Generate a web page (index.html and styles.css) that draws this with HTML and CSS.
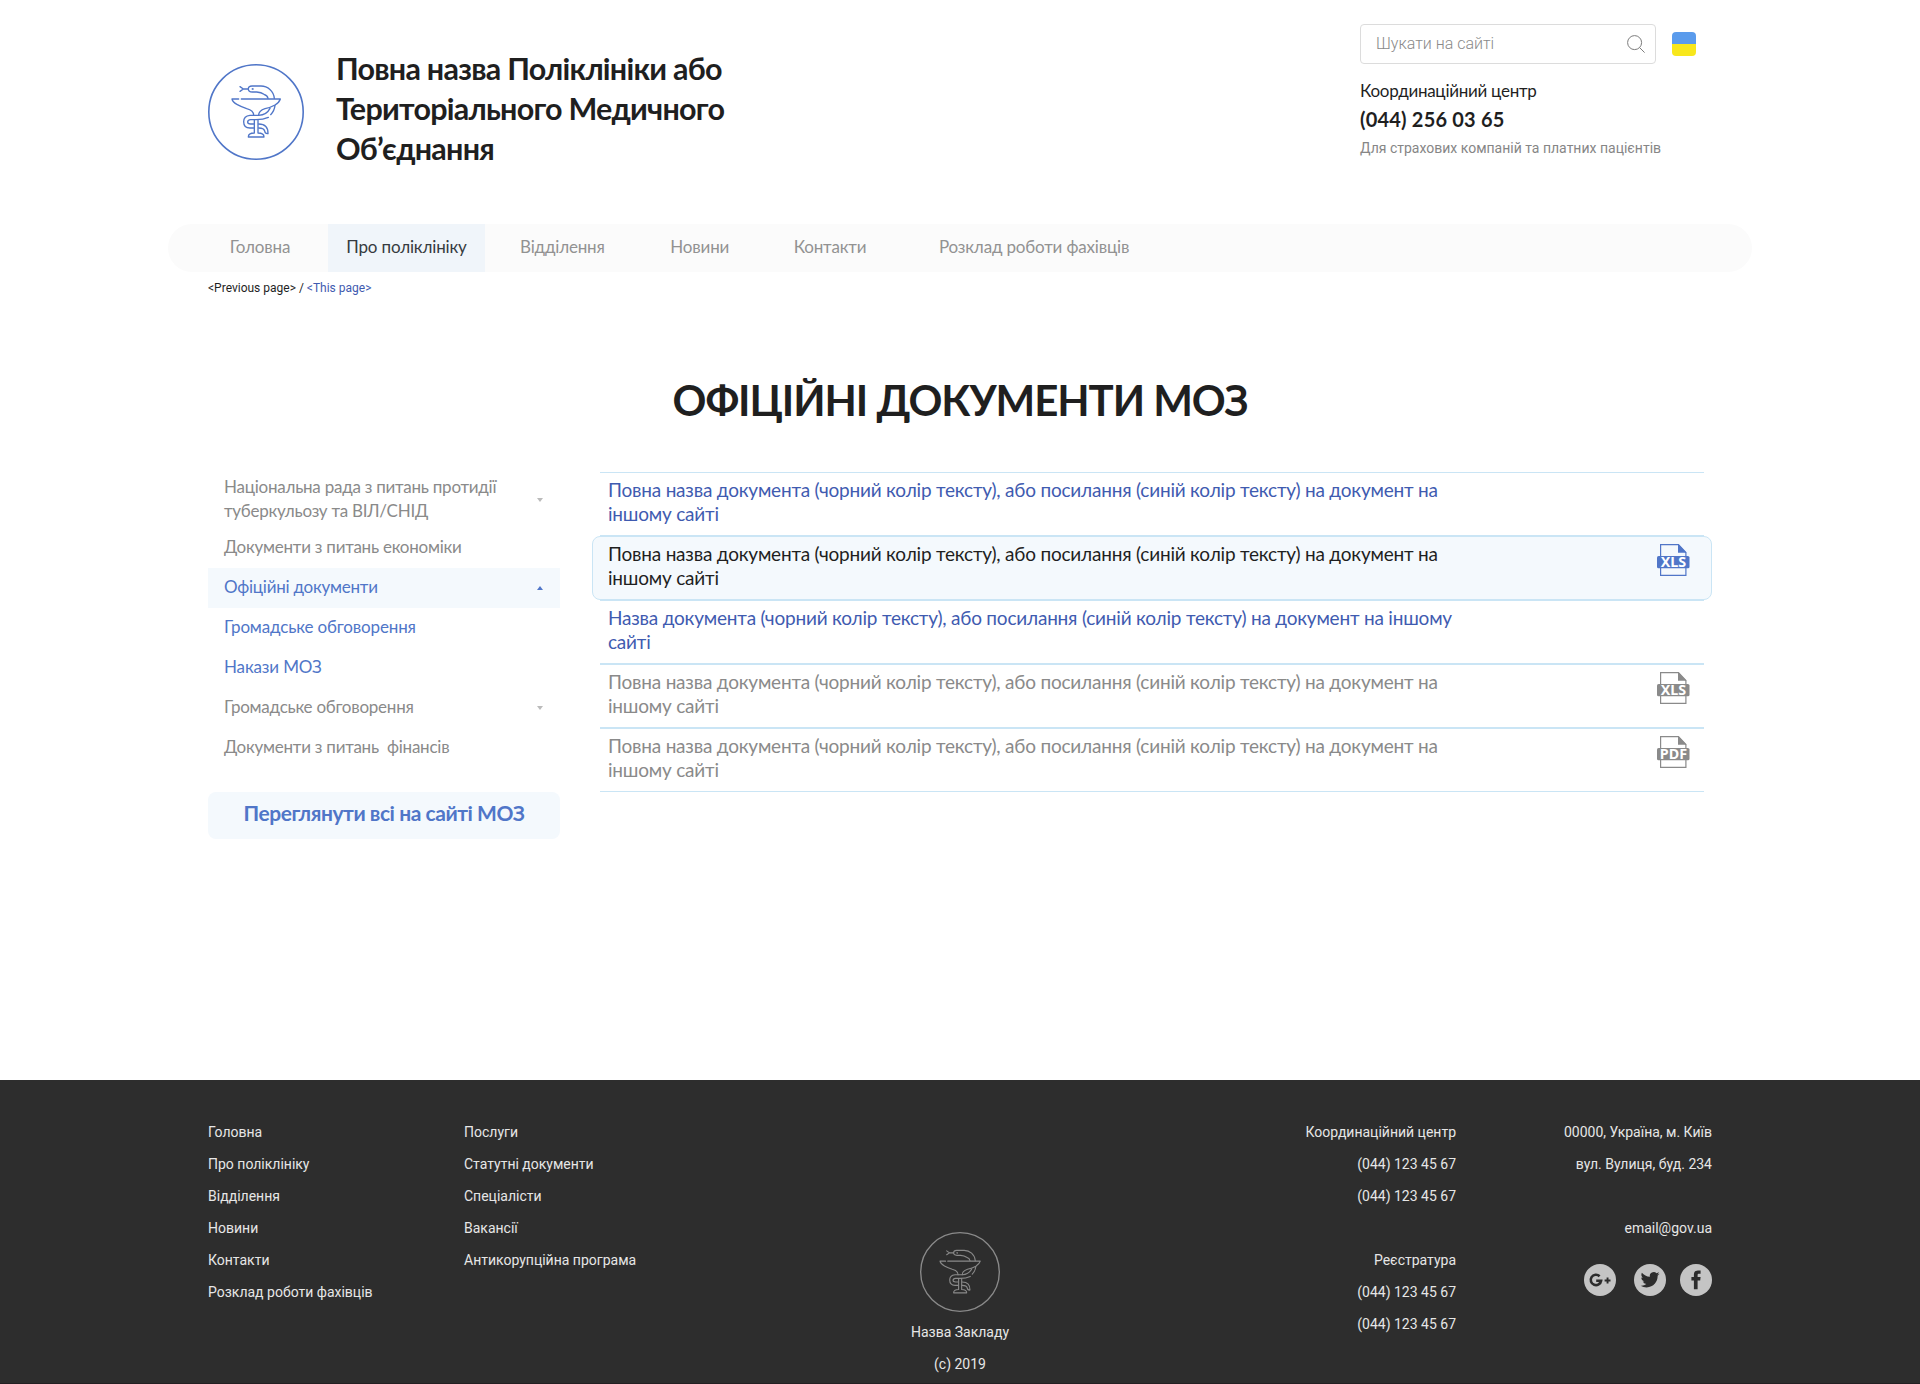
FILE: index.html
```html
<!DOCTYPE html>
<html lang="uk">
<head>
<meta charset="utf-8">
<title>Офіційні документи МОЗ</title>
<link rel="stylesheet" href="styles.css">
</head>
<body>
<svg class="defs" aria-hidden="true">
  <symbol id="emblem" viewBox="0 0 96 96">
    <circle cx="48" cy="48" r="47.2" fill="none" stroke="currentColor" stroke-width="1.6"/>
    <g transform="translate(-8 -9) scale(.33333)" fill="none" stroke="currentColor" stroke-width="4" stroke-linecap="round" stroke-linejoin="round">
      <path d="M120 95 L130 102 L120 109 M130 102 H145"/>
      <path d="M223 130 C221 108 203 93 183 93 H156 Q145 93 145 102 Q145 111 157 111 H170 Q184 112 192 118 Q203 122 204 130"/>
      <circle cx="158" cy="102" r="1.2"/>
      <path d="M116 132 H96 Q98 142 112 149 Q125 156 140 161 Q161 166 161 181"/>
      <path d="M124 132 H241 Q238 142 225 150 Q213 157 195 161 Q176 167 176 181"/>
      <path d="M225 151 Q223 168 212 179"/>
      <path d="M210 160 Q200 180 176 181 H150 Q131 183 131 200 Q131 219 150 219 H161"/>
      <path d="M205 187 Q190 194 168 194 H152 Q143 195 143 201 Q143 207 152 207 H161"/>
      <path d="M176 207 Q205 207 204 236 Q195 237 194 228 Q192 219 176 219"/>
      <path d="M163 195 V234 Q145 234 145 246 H192 Q192 234 174 234 V195"/>
    </g>
  </symbol>
  <symbol id="page" viewBox="0 0 33 32">
    <path d="M3.6 12V.6H21.5L28.9 8.5V12M3.6 24V31.4H28.9V24" fill="none" stroke="currentColor" stroke-width="1.2"/>
    <path d="M21 0L29.5 8.7H21Z" fill="currentColor"/>
    <rect y="12" width="32.5" height="12.3" rx="1.6" fill="currentColor"/>
  </symbol>
</svg>

<header class="header">
  <svg class="header-logo"><use href="#emblem"/></svg>
  <div class="header-name">Повна назва Поліклініки або<br>Територіального Медичного<br>Об’єднання</div>
  <div class="header-side">
    <div class="tools">
      <div class="search">
        <span class="search-text">Шукати на сайті</span>
        <svg class="search-icon" viewBox="0 0 18 18"><circle cx="7.6" cy="7.6" r="7" /><path d="M12.6 12.6L17.6 17.6"/></svg>
      </div>
      <div class="flag"></div>
    </div>
    <div class="center-name">Координаційний центр</div>
    <div class="center-phone">(044) 256 03 65</div>
    <div class="center-note">Для страхових компаній та платних пацієнтів</div>
  </div>
</header>

<nav class="nav">
  <a class="nav-item home">Головна</a>
  <a class="nav-item active">Про поліклініку</a>
  <a class="nav-item dept">Відділення</a>
  <a class="nav-item news">Новини</a>
  <a class="nav-item contacts">Контакти</a>
  <a class="nav-item schedule">Розклад роботи фахівців</a>
</nav>

<div class="crumbs">&lt;Previous page&gt; / <span class="here">&lt;This page&gt;</span></div>

<h1 class="title">ОФІЦІЙНІ ДОКУМЕНТИ МОЗ</h1>

<main class="main">
  <aside class="side">
    <a class="side-item tall down"><span>Національна рада з питань протидії<br>туберкульозу та ВІЛ/СНІД</span></a>
    <a class="side-item">Документи з питань економіки</a>
    <a class="side-item open up">Офіційні документи</a>
    <a class="side-item sub">Громадське обговорення</a>
    <a class="side-item sub">Накази МОЗ</a>
    <a class="side-item down">Громадське обговорення</a>
    <a class="side-item">Документи з питань&nbsp; фінансів</a>
    <a class="all">Переглянути всі на сайті МОЗ</a>
  </aside>
  <section class="docs">
    <a class="doc link"><span>Повна назва документа (чорний колір тексту), або посилання (синій колір тексту) на документ на<br>іншому сайті</span></a>
    <a class="doc hover"><span>Повна назва документа (чорний колір тексту), або посилання (синій колір тексту) на документ на<br>іншому сайті</span>
      <svg class="doc-icon" viewBox="0 0 33 32"><use href="#page"/><text x="16.4" y="22.9">XLS</text></svg></a>
    <a class="doc link"><span>Назва документа (чорний колір тексту), або посилання (синій колір тексту) на документ на іншому<br>сайті</span></a>
    <a class="doc"><span>Повна назва документа (чорний колір тексту), або посилання (синій колір тексту) на документ на<br>іншому сайті</span>
      <svg class="doc-icon" viewBox="0 0 33 32"><use href="#page"/><text x="16.4" y="22.9">XLS</text></svg></a>
    <a class="doc"><span>Повна назва документа (чорний колір тексту), або посилання (синій колір тексту) на документ на<br>іншому сайті</span>
      <svg class="doc-icon" viewBox="0 0 33 32"><use href="#page"/><text x="16.4" y="22.9">PDF</text></svg></a>
  </section>
</main>

<footer class="footer">
  <div class="foot-col"><a>Головна</a><a>Про поліклініку</a><a>Відділення</a><a>Новини</a><a>Контакти</a><a>Розклад роботи фахівців</a></div>
  <div class="foot-col"><a>Послуги</a><a>Статутні документи</a><a>Спеціалісти</a><a>Вакансії</a><a>Антикорупційна програма</a></div>
  <div class="foot-brand"><svg class="foot-logo"><use href="#emblem"/></svg><div>Назва Закладу</div><div>(с) 2019</div></div>
  <div class="foot-col right"><span>Координаційний центр</span><span>(044) 123 45 67</span><span>(044) 123 45 67</span><span class="gap">Реєстратура</span><span>(044) 123 45 67</span><span>(044) 123 45 67</span></div>
  <div class="foot-col right"><span>00000, Україна, м. Київ</span><span>вул. Вулиця, буд. 234</span><span class="gap">email@gov.ua</span>
    <div class="social">
      <svg viewBox="0 0 32 32"><circle cx="16" cy="16" r="16"/><path class="mark-line" d="M15.6 12.2A5.2 5.2 0 1 0 17.1 16.7H12.2"/><path class="mark" d="M22.6 13.6h1.9v2h2v1.9h-2v2h-1.9v-2h-2v-1.9h2z"/></svg>
      <svg viewBox="0 0 32 32"><circle cx="16" cy="16" r="16"/><path class="mark" transform="translate(6.6 6.2) scale(.79)" d="M23.95 4.57a10 10 0 0 1-2.82.77 4.96 4.96 0 0 0 2.16-2.72c-.95.55-2 .95-3.13 1.18a4.92 4.92 0 0 0-8.38 4.48C7.69 8.09 4.07 6.13 1.64 3.16a4.82 4.82 0 0 0-.67 2.48c0 1.71.87 3.21 2.19 4.1a4.9 4.9 0 0 1-2.23-.62v.06a4.92 4.92 0 0 0 3.95 4.83 5 5 0 0 1-2.21.08 4.94 4.94 0 0 0 4.6 3.42A9.87 9.87 0 0 1 0 19.54a14 14 0 0 0 7.55 2.21c9.05 0 14-7.5 14-13.98 0-.21 0-.42-.02-.63a9.94 9.94 0 0 0 2.46-2.55z"/></svg>
      <svg viewBox="0 0 32 32"><circle cx="16" cy="16" r="16"/><path class="mark" d="M13.9 25.3V16.6H11.4V13.1H13.9V10.5Q13.9 6.5 17.8 6.5H20.6V9.8H18.6Q17.6 9.8 17.6 11V13.1H20.6L20.2 16.6H17.6V25.3Z"/></svg>
    </div>
  </div>
</footer>
</body>
</html>
```
FILE: styles.css
```css
* { box-sizing: border-box; }
body {
  margin: 0;
  width: 1920px;
  height: 1384px;
  overflow: hidden;
  display: flex;
  flex-direction: column;
  background: #fff;
  color: #1f1f1f;
  font-family: Lato, "Open Sans", sans-serif;
  font-size: 17px;
}
.defs { position: absolute; width: 0; height: 0; }

/* Header */
.header { display: flex; height: 224px; padding: 24px 208px 0; }
.header-logo { width: 96px; height: 96px; margin-top: 40px; color: #5076c8; }
.header-name { margin: 24px 0 0 32px; font-size: 30.5px; line-height: 40px; font-weight: 700; letter-spacing: -.75px; white-space: nowrap; }
.header-side { width: 352px; margin-left: auto; white-space: nowrap; }
.tools { display: flex; align-items: center; gap: 16px; }
.search { display: flex; align-items: center; justify-content: space-between; width: 296px; height: 40px; padding: 0 10px 0 15px; border: 1px solid #dcdcdc; border-radius: 4px; }
.search-text { font: 300 16px/20px Roboto, sans-serif; color: #8a8a8a; }
.search-icon { width: 18px; height: 18px; fill: none; stroke: #7c7c7c; }
.flag { width: 24px; height: 24px; border-radius: 4px; background: linear-gradient(#5a9bec 50%, #f8e71c 50%); }
.center-name { margin-top: 15px; line-height: 24px; letter-spacing: -.27px; }
.center-phone { margin-top: 4px; line-height: 24px; font-size: 20px; font-weight: 700; letter-spacing: .2px; }
.center-note { margin-top: 5px; font: 14px/24px Roboto, sans-serif; color: #868686; }

/* Navigation */
.nav { display: flex; height: 48px; margin: 0 168px; padding-left: 24px; border-radius: 24px; background: #fbfbfb; color: #929292; line-height: 45px; letter-spacing: -.17px; white-space: nowrap; }
.nav-item { text-align: center; }
.home { width: 136px; }
.active { width: 157px; background: #f0f5fa; color: #363b40; }
.dept { margin-left: 35px; }
.news { margin-left: 65.5px; }
.contacts { margin-left: 64.5px; }
.schedule { margin-left: 72.5px; }

.crumbs { padding: 8px 208px 0; font: 12px/16px Roboto, sans-serif; color: #1f1f1f; }
.here { color: #3f5bb0; }
.title { margin: 76px 0 0; height: 100px; font-size: 42px; line-height: 57px; font-weight: 700; letter-spacing: -1.05px; text-align: center; white-space: nowrap; }

/* Section list */
.main { display: flex; gap: 32px; padding-left: 208px; }
.side { width: 352px; display: flex; flex-direction: column; color: #8a8a8a; letter-spacing: -.25px; }
.side-item { display: flex; align-items: center; justify-content: space-between; height: 40px; padding: 0 17px 2px 16px; line-height: 24px; white-space: nowrap; }
.tall { height: 56px; }
.open { background: #f4f9fd; }
.open, .sub { color: #5076c8; }
.down::after, .up::after { content: ""; margin-top: 2px; border: 3px solid transparent; border-bottom: 0; border-top: 4px solid #bbb; }
.up::after { border-top: 0; border-bottom: 4px solid #5076c8; }
.sub { letter-spacing: -.15px; }
.all { height: 47px; margin-top: 24px; border-radius: 8px; background: #f4f9fd; color: #5076c8; font-size: 21px; line-height: 42px; font-weight: 700; letter-spacing: -.45px; text-align: center; }

/* Documents */
.docs { width: 1120px; color: #8a8a8a; font-size: 19px; letter-spacing: -.21px; }
.doc { display: flex; justify-content: space-between; height: 64px; margin: 0 8px; padding: 5px 14px 0 8px; border: 1px solid #cae5f5; border-width: 1px 0; line-height: 24px; white-space: nowrap; }
.link { color: #3f5bb0; }
.hover { margin: 0; padding: 5px 21px 0 15px; border-width: 1px; border-radius: 8px; background: #f4f9fd; color: #1f1f1f; }
.doc-icon { width: 33px; height: 32px; margin-top: 2px; }
.hover .doc-icon { color: #5076c8; }
.doc-icon text { font: 700 14.3px "Noto Sans", sans-serif; letter-spacing: 0; fill: #fff; text-anchor: middle; }

/* Footer */
.footer { display: flex; height: 304px; margin-top: auto; padding: 36px 208px 0; background: #2d2d2d; color: #e6e6e6; border-bottom: 1px solid #241f22; font: 14px/32px Roboto, sans-serif; }
.foot-col { display: flex; flex-direction: column; width: 256px; }
.foot-brand { width: 480px; padding-top: 116px; text-align: center; }
.foot-logo { display: block; width: 80px; height: 80px; margin: 0 auto 4px; color: #8a8a8a; }
.right { text-align: right; }
.gap { margin-top: 32px; }
.social { display: flex; justify-content: flex-end; margin-top: 20px; }
.social svg { width: 32px; height: 32px; fill: #c4c4c4; }
.social svg:nth-child(2) { margin: 0 14px 0 18px; }
.social .mark { fill: #2d2d2d; }
.social .mark-line { fill: none; stroke: #2d2d2d; stroke-width: 2.6; }
```
